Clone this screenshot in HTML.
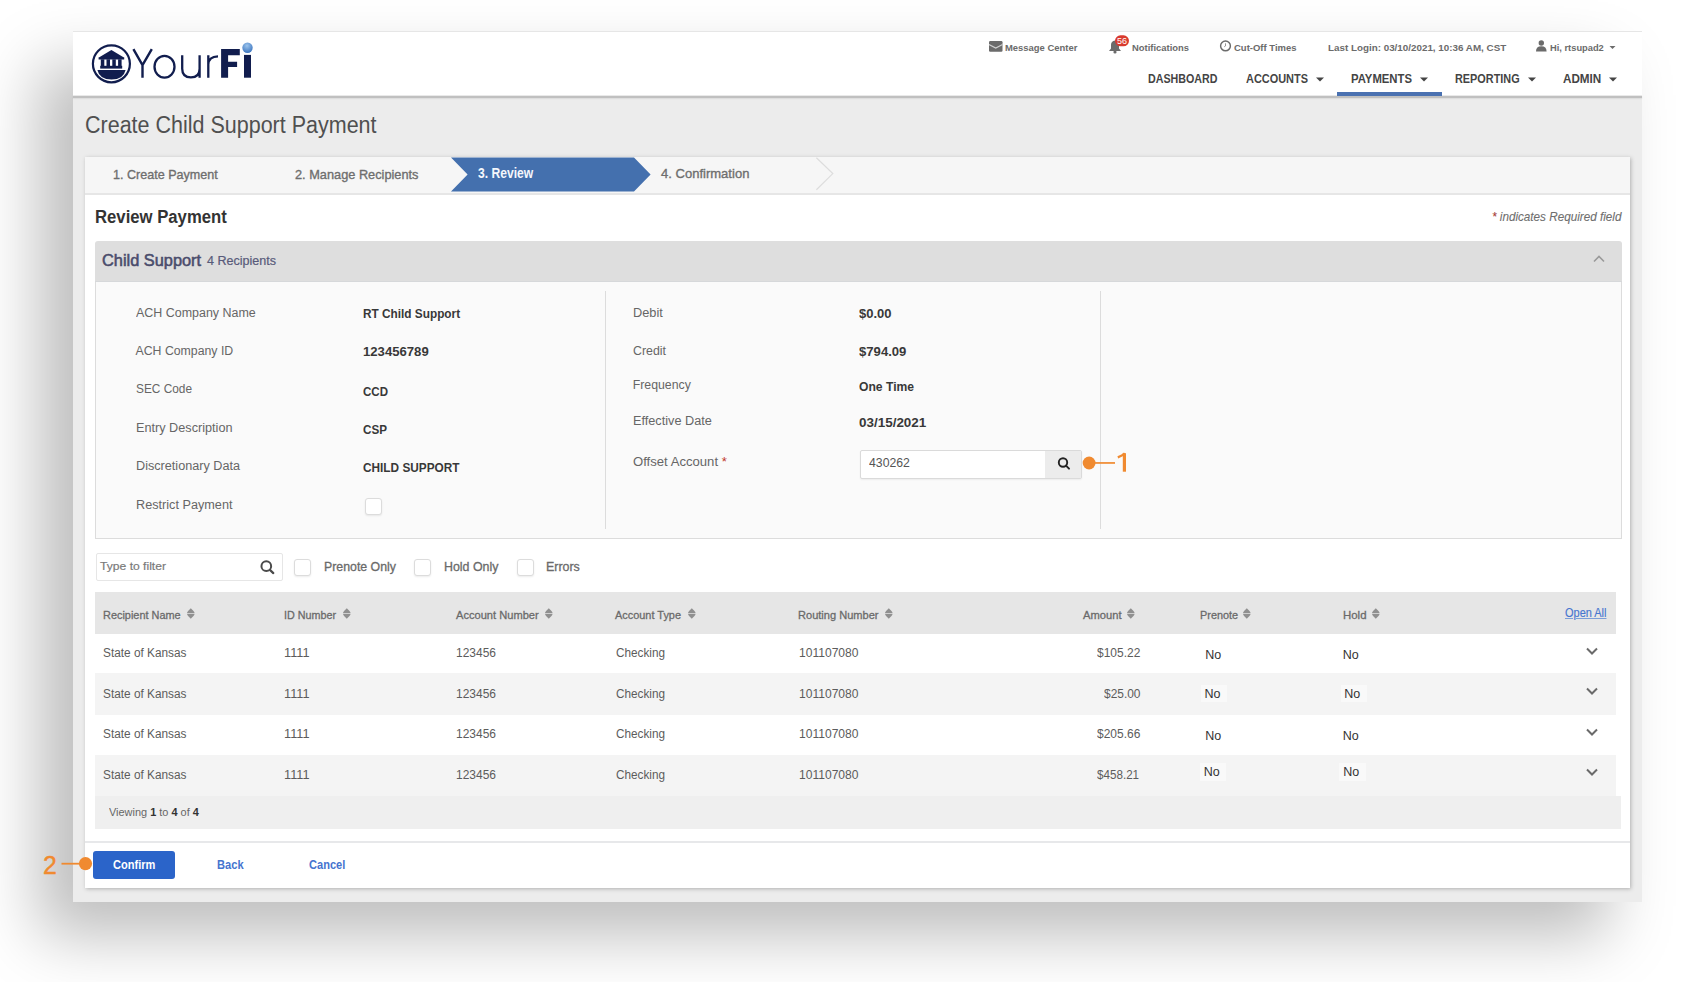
<!DOCTYPE html>
<html><head><meta charset="utf-8"><title>Create Child Support Payment</title>
<style>
html,body{margin:0;padding:0;}
body{width:1686px;height:982px;overflow:hidden;background:#fff;position:relative;font-family:"Liberation Sans",sans-serif;}
#root{position:absolute;left:0;top:0;width:1686px;height:982px;overflow:hidden;}
.t{position:absolute;white-space:nowrap;transform-origin:0 0;}
.a{position:absolute;box-sizing:border-box;}
#win{position:absolute;left:73px;top:31px;width:1569px;height:871px;background:#ececec;box-shadow:-34px 34px 60px rgba(0,0,0,0.26);}
#hdr{position:absolute;left:73px;top:31px;width:1569px;height:64px;background:#fff;border-top:1px solid #e6e6e6;box-sizing:border-box;}
#hdrline{position:absolute;left:73px;top:95.5px;width:1569px;height:2.5px;background:#c0c0c0;box-shadow:0 0.5px 1.5px rgba(0,0,0,0.12);}
#card{position:absolute;left:85.3px;top:157px;width:1545px;height:731px;background:#fff;box-shadow:1px 1px 4px rgba(0,0,0,0.25);}
#stepper{position:absolute;left:85.3px;top:157px;width:1545px;height:35.8px;background:#f6f6f6;border-bottom:2.2px solid #e6e6e6;}
#ph{position:absolute;left:95px;top:241.3px;width:1526.5px;height:40.5px;background:#dedede;border-radius:3px 3px 0 0;border-bottom:1.5px solid #d6d8da;box-sizing:border-box;}
#pb{position:absolute;left:95px;top:281.8px;width:1526.5px;height:257px;background:#fafafa;border:1px solid #dcdcdc;border-top:none;box-sizing:border-box;}
.vd{position:absolute;width:1px;background:#dcdcdc;top:291px;height:238px;}
.cb{position:absolute;width:17px;height:17px;border:1px solid #dcdcdc;border-radius:3px;background:#fff;box-sizing:border-box;box-shadow:0 1px 2px rgba(0,0,0,0.08);}
#filt{position:absolute;left:95.5px;top:553px;width:187.5px;height:28px;border:1px solid #e6e6e6;border-radius:2px;background:#fff;box-sizing:border-box;}
#th{position:absolute;left:95px;top:592.4px;width:1521px;height:41.6px;background:#e6e6e6;}
.row{position:absolute;left:95px;width:1521px;}
#foot{position:absolute;left:94.5px;top:795.8px;width:1526.8px;height:33.3px;background:#efefef;}
#div2{position:absolute;left:85.3px;top:840.9px;width:1545px;height:1.8px;background:#e7e8ea;}
#confirm{position:absolute;left:93px;top:851px;width:82px;height:28px;background:#2b64c9;border-radius:3px;}
#offin{position:absolute;left:859.5px;top:449.5px;width:222.5px;height:29px;border:1px solid #dadada;border-radius:2px;background:#fff;box-sizing:border-box;box-shadow:0 1px 2px rgba(0,0,0,0.06);}
#offbtn{position:absolute;left:1044.5px;top:450.5px;width:36.5px;height:27px;background:#ececec;}

</style></head><body><div id="root">
<div id="win"></div>
<div id="hdr"></div>
<div id="hdrline"></div>
<!-- blue underline -->
<div class="a" style="left:1337px;top:92.2px;width:105px;height:3.4px;background:#4a71b1"></div>
<!-- logo -->
<svg class="a" style="left:85px;top:35px" width="180" height="60" viewBox="85 35 180 60">
  <circle cx="111.4" cy="63.8" r="18.5" fill="none" stroke="#111d4e" stroke-width="2.2"/>
  <path d="M111.4 50 L123.5 57.2 L124.2 57.2 L124.2 59.4 L98.6 59.4 L98.6 57.2 L99.3 57.2 Z" fill="#111d4e"/>
  <rect x="100.8" y="59.3" width="3.5" height="6.8" fill="#111d4e"/>
  <rect x="106.5" y="59.3" width="3.5" height="6.8" fill="#111d4e"/>
  <rect x="112.3" y="59.3" width="3.5" height="6.8" fill="#111d4e"/>
  <rect x="118.1" y="59.3" width="3.5" height="6.8" fill="#111d4e"/>
  <rect x="100.2" y="65.8" width="22" height="2.8" fill="#111d4e"/>
  <path d="M97.4 70 L125.6 70 Q123.5 79.6 111.5 79.6 Q99.5 79.6 97.4 70 Z" fill="#111d4e"/>
  <path d="M133.4 49.2 L142.5 65 L151.8 49.2 M142.5 64.6 L142.5 77.7" fill="none" stroke="#111d4e" stroke-width="2.4"/>
  <ellipse cx="164.5" cy="66.7" rx="10" ry="10.9" fill="none" stroke="#111d4e" stroke-width="2.3"/>
  <path d="M182.2 55.3 L182.2 68.8 Q182.2 77.4 190.9 77.4 Q199.6 77.4 199.6 68.8 M199.6 55.3 L199.6 77.7" fill="none" stroke="#111d4e" stroke-width="2.3"/>
  <path d="M208.3 55.3 L208.3 77.7 M208.3 64.5 Q208.6 56.5 218 56.3" fill="none" stroke="#111d4e" stroke-width="2.3"/>
  <path d="M221.1 48.9 L239.8 48.9 L239.8 55.3 L228.1 55.3 L228.1 61.7 L237.1 61.7 L237.1 67 L228.1 67 L228.1 77.7 L221.1 77.7 Z" fill="#111d4e"/>
  <rect x="244" y="54.9" width="7" height="22.8" fill="#111d4e"/>
  <defs><radialGradient id="dg" cx="0.45" cy="0.3" r="0.75"><stop offset="0" stop-color="#9cc4ec"/><stop offset="1" stop-color="#3570bd"/></radialGradient></defs>
  <circle cx="247.5" cy="47.8" r="5.2" fill="url(#dg)"/>
</svg>
<!-- header icons -->
<svg class="a" style="left:988.5px;top:41px" width="14" height="11" viewBox="0 0 14 11">
  <rect x="0" y="0" width="13.5" height="10.7" rx="1.2" fill="#6b6b6b"/>
  <path d="M0 3.6 L6.75 7.1 L13.5 3.6" fill="none" stroke="#d0d0d0" stroke-width="1.1"/>
</svg>
<svg class="a" style="left:1108px;top:34px" width="24" height="20" viewBox="0 0 24 20">
  <path d="M1 17 L3 14.5 L3 11 Q3 7 7 6.5 Q11 7 11 11 L11 14.5 L13 17 Z" fill="#6b6b6b"/>
  <circle cx="7" cy="18" r="1.6" fill="#6b6b6b"/>
  <rect x="7" y="1.3" width="14" height="11" rx="5.5" fill="#d93a2e"/>
  <text x="14" y="10.2" font-family="Liberation Sans" font-size="9" fill="#fff" text-anchor="middle" style="font-family:'Liberation Sans'">56</text>
</svg>
<svg class="a" style="left:1219px;top:40px" width="13" height="13" viewBox="0 0 13 13">
  <circle cx="6.5" cy="5.9" r="4.9" fill="none" stroke="#6b6b6b" stroke-width="1.45"/>
  <path d="M6.5 3.3 L6.5 6 L5.2 6.8" fill="none" stroke="#8a8a8a" stroke-width="0.9"/>
</svg>
<svg class="a" style="left:1535px;top:40px" width="13" height="12" viewBox="0 0 13 12">
  <circle cx="6.3" cy="3" r="2.7" fill="#6b6b6b"/>
  <path d="M1 11.5 Q1 6.2 6.3 6.2 Q11.6 6.2 11.6 11.5 Z" fill="#6b6b6b"/>
</svg>
<svg class="a" style="left:1605px;top:44px" width="14" height="6" viewBox="0 0 14 6"><path d="M4.5 2 L10.5 2 L7.5 5 Z" fill="#6b6b6b"/></svg>
<!-- nav carets -->
<svg class="a" style="left:1314px;top:75px" width="12" height="8" viewBox="0 0 12 8"><path d="M2 2.5 L10 2.5 L6 6.5 Z" fill="#444"/></svg>
<svg class="a" style="left:1418px;top:75px" width="12" height="8" viewBox="0 0 12 8"><path d="M2 2.5 L10 2.5 L6 6.5 Z" fill="#444"/></svg>
<svg class="a" style="left:1525.5px;top:75px" width="12" height="8" viewBox="0 0 12 8"><path d="M2 2.5 L10 2.5 L6 6.5 Z" fill="#444"/></svg>
<svg class="a" style="left:1607px;top:75px" width="12" height="8" viewBox="0 0 12 8"><path d="M2 2.5 L10 2.5 L6 6.5 Z" fill="#444"/></svg>

<div id="card"></div>
<div id="stepper"></div>
<svg class="a" style="left:440px;top:157px" width="410" height="36" viewBox="440 157 410 36">
  <path d="M451 157.4 L634 157.4 L650.6 174.4 L634 191.5 L451 191.5 L467.6 174.4 Z" fill="#4470ae"/>
  <path d="M816.4 157.8 L832.8 173.6 L816.4 189.8" fill="none" stroke="#dddddd" stroke-width="1.2"/>
</svg>

<div id="ph"></div>
<svg class="a" style="left:1590px;top:250px" width="18" height="16" viewBox="0 0 18 16"><path d="M4 11.5 L9 6.5 L14 11.5" fill="none" stroke="#9a9a9a" stroke-width="1.6"/></svg>
<div id="pb"></div>
<div class="vd" style="left:605px"></div>
<div class="vd" style="left:1100.3px"></div>
<div class="cb" style="left:364.5px;top:497.5px;"></div>
<div id="offin"></div>
<div id="offbtn"></div>
<svg class="a" style="left:1056px;top:456px" width="16" height="16" viewBox="0 0 16 16">
  <circle cx="7" cy="6.5" r="4.2" fill="none" stroke="#222" stroke-width="1.9"/>
  <path d="M10 9.6 L13 12.6" stroke="#222" stroke-width="2" stroke-linecap="round"/>
</svg>

<div id="filt"></div>
<svg class="a" style="left:258px;top:558px" width="18" height="18" viewBox="0 0 18 18">
  <circle cx="8.3" cy="8.2" r="4.85" fill="none" stroke="#4a4a4a" stroke-width="2"/>
  <path d="M11.9 11.9 L15.3 15.1" stroke="#4a4a4a" stroke-width="2.2" stroke-linecap="round"/>
</svg>
<div class="cb" style="left:294px;top:558.5px;"></div>
<div class="cb" style="left:414px;top:558.5px;"></div>
<div class="cb" style="left:516.5px;top:558.5px;"></div>

<div id="th"></div>
<div class="row" style="top:634px;height:39px;background:#fff"></div>
<div class="row" style="top:673px;height:41.5px;background:#f4f4f4"></div>
<div class="row" style="top:714.5px;height:40px;background:#fff"></div>
<div class="row" style="top:754.5px;height:41px;background:#f4f4f4"></div>
<div id="foot"></div>
<div id="div2"></div>
<div id="confirm"></div>

<!-- sort icons -->
<svg width="0" height="0" style="position:absolute"><defs><g id="sort"><path d="M3.8 0.2 C5.3 1.6 7.6 3.6 7.6 5.1 L0 5.1 C0 3.6 2.3 1.6 3.8 0.2 Z M0 5.8 L7.6 5.8 C7.6 7.3 5.3 9.3 3.8 10.7 C2.3 9.3 0 7.3 0 5.8 Z" fill="#909090"/></g></defs></svg>
<svg class="a" style="left:186.5px;top:607.5px" width="8" height="11"><use href="#sort"/></svg>
<svg class="a" style="left:342.5px;top:607.5px" width="8" height="11"><use href="#sort"/></svg>
<svg class="a" style="left:545px;top:607.5px" width="8" height="11"><use href="#sort"/></svg>
<svg class="a" style="left:688px;top:607.5px" width="8" height="11"><use href="#sort"/></svg>
<svg class="a" style="left:884.5px;top:607.5px" width="8" height="11"><use href="#sort"/></svg>
<svg class="a" style="left:1127px;top:607.5px" width="8" height="11"><use href="#sort"/></svg>
<svg class="a" style="left:1243px;top:607.5px" width="8" height="11"><use href="#sort"/></svg>
<svg class="a" style="left:1371.5px;top:607.5px" width="8" height="11"><use href="#sort"/></svg>

<!-- row chevrons -->
<svg width="0" height="0" style="position:absolute"><defs><g id="chev"><path d="M1 1.5 L6 6.5 L11 1.5" fill="none" stroke="#6a6a6a" stroke-width="2"/></g></defs></svg>
<svg class="a" style="left:1586px;top:646.5px" width="12" height="9"><use href="#chev"/></svg>
<svg class="a" style="left:1586px;top:687.2px" width="12" height="9"><use href="#chev"/></svg>
<svg class="a" style="left:1586px;top:727.7px" width="12" height="9"><use href="#chev"/></svg>
<svg class="a" style="left:1586px;top:768.3px" width="12" height="9"><use href="#chev"/></svg>

<!-- annotations -->
<svg class="a" style="left:0;top:0" width="1686" height="982">
  <circle cx="1089.1" cy="463" r="6.4" fill="#f08a30"/>
  <rect x="1089" y="462.1" width="26" height="1.7" fill="#f08a30"/>
  <rect x="1122.8" y="453.2" width="3.2" height="18.5" fill="#f08a30"/>
  <path d="M1117.8 457.3 Q1122.6 455.6 1124.8 453.4" fill="none" stroke="#f08a30" stroke-width="2.3"/>
  <circle cx="85.5" cy="863.6" r="6.6" fill="#f08a30"/>
  <rect x="61.5" y="862.8" width="24" height="1.8" fill="#f08a30"/>
</svg>
<div class="a" style="left:1200.5px;top:685px;width:26.2px;height:17px;background:#f9f9f9"></div>
<div class="a" style="left:1340.5px;top:685px;width:26px;height:17px;background:#f9f9f9"></div>
<div class="a" style="left:1199.5px;top:763px;width:26px;height:17.5px;background:#f9f9f9"></div>
<div class="a" style="left:1339px;top:763px;width:26.7px;height:17.5px;background:#f9f9f9"></div>

<div class='t' style="left:1005.0px;top:42.77px;font-size:9.6px;line-height:9.6px;font-weight:700;color:#6b6b6b;transform:scaleX(0.9838);">Message Center</div><div class='t' style="left:1132.3px;top:42.77px;font-size:9.6px;line-height:9.6px;font-weight:700;color:#6b6b6b;transform:scaleX(0.9809);">Notifications</div><div class='t' style="left:1234.3px;top:42.77px;font-size:9.6px;line-height:9.6px;font-weight:700;color:#6b6b6b;transform:scaleX(0.9881);">Cut-Off Times</div><div class='t' style="left:1327.8px;top:42.77px;font-size:9.6px;line-height:9.6px;font-weight:700;color:#6b6b6b;transform:scaleX(1.0241);">Last Login: 03/10/2021, 10:36 AM, CST</div><div class='t' style="left:1550.0px;top:42.77px;font-size:9.6px;line-height:9.6px;font-weight:700;color:#6b6b6b;transform:scaleX(0.9702);">Hi, rtsupad2</div><div class='t' style="left:1148.3px;top:72.56px;font-size:12.8px;line-height:12.8px;font-weight:700;color:#444;transform:scaleX(0.8355);">DASHBOARD</div><div class='t' style="left:1246.0px;top:72.56px;font-size:12.8px;line-height:12.8px;font-weight:700;color:#444;transform:scaleX(0.8550);">ACCOUNTS</div><div class='t' style="left:1351.0px;top:72.56px;font-size:12.8px;line-height:12.8px;font-weight:700;color:#444;transform:scaleX(0.8843);">PAYMENTS</div><div class='t' style="left:1455.0px;top:72.56px;font-size:12.8px;line-height:12.8px;font-weight:700;color:#444;transform:scaleX(0.8491);">REPORTING</div><div class='t' style="left:1562.7px;top:72.56px;font-size:12.8px;line-height:12.8px;font-weight:700;color:#444;transform:scaleX(0.9129);">ADMIN</div><div class='t' style="left:85.3px;top:114.13px;font-size:23px;line-height:23px;font-weight:400;color:#505050;transform:scaleX(0.9345);">Create Child Support Payment</div><div class='t' style="left:113.2px;top:167.96px;font-size:13.4px;line-height:13.4px;font-weight:400;color:#6e6e6e;transform:scaleX(0.9386);;-webkit-text-stroke:0.35px #6e6e6e">1. Create Payment</div><div class='t' style="left:295.0px;top:167.96px;font-size:13.4px;line-height:13.4px;font-weight:400;color:#6e6e6e;transform:scaleX(0.9534);;-webkit-text-stroke:0.35px #6e6e6e">2. Manage Recipients</div><div class='t' style="left:477.7px;top:167.12px;font-size:13.8px;line-height:13.8px;font-weight:700;color:#f4f7fc;transform:scaleX(0.8777);">3. Review</div><div class='t' style="left:661.0px;top:166.96px;font-size:13.4px;line-height:13.4px;font-weight:400;color:#6e6e6e;transform:scaleX(0.9734);;-webkit-text-stroke:0.35px #6e6e6e">4. Confirmation</div><div class='t' style="left:95.0px;top:209.19px;font-size:17.5px;line-height:17.5px;font-weight:700;color:#333;transform:scaleX(0.9542);">Review Payment</div><div class='t' style="left:1492.3px;top:210.53px;font-size:12.6px;line-height:12.6px;font-weight:400;color:#6e6e6e;font-style:italic;transform:scaleX(0.9287);;-webkit-text-stroke:0.1px #6e6e6e"><span style="color:#b5332b">*</span> indicates Required field</div><div class='t' style="left:102.2px;top:251.53px;font-size:16.5px;line-height:16.5px;font-weight:400;color:#4a4c6c;transform:scaleX(0.9912);;-webkit-text-stroke:0.55px #4a4c6c">Child Support</div><div class='t' style="left:206.6px;top:255.34px;font-size:12px;line-height:12px;font-weight:400;color:#585a7a;transform:scaleX(1.0462);;-webkit-text-stroke:0.2px #585a7a">4 Recipients</div><div class='t' style="left:135.5px;top:307.39px;font-size:12.3px;line-height:12.3px;font-weight:400;color:#666;transform:scaleX(1.0132);">ACH Company Name</div><div class='t' style="left:362.5px;top:307.99px;font-size:12.3px;line-height:12.3px;font-weight:700;color:#383838;transform:scaleX(0.9605);">RT Child Support</div><div class='t' style="left:135.5px;top:344.89px;font-size:12.3px;line-height:12.3px;font-weight:400;color:#666;">ACH Company ID</div><div class='t' style="left:362.5px;top:346.49px;font-size:12.3px;line-height:12.3px;font-weight:700;color:#383838;transform:scaleX(1.0672);">123456789</div><div class='t' style="left:135.5px;top:383.29px;font-size:12.3px;line-height:12.3px;font-weight:400;color:#666;transform:scaleX(0.9637);">SEC Code</div><div class='t' style="left:362.5px;top:385.59px;font-size:12.3px;line-height:12.3px;font-weight:700;color:#383838;transform:scaleX(0.9379);">CCD</div><div class='t' style="left:135.5px;top:421.59px;font-size:12.3px;line-height:12.3px;font-weight:400;color:#666;transform:scaleX(1.0305);">Entry Description</div><div class='t' style="left:362.5px;top:423.99px;font-size:12.3px;line-height:12.3px;font-weight:700;color:#383838;transform:scaleX(0.9487);">CSP</div><div class='t' style="left:135.5px;top:460.49px;font-size:12.3px;line-height:12.3px;font-weight:400;color:#666;transform:scaleX(1.0281);">Discretionary Data</div><div class='t' style="left:362.5px;top:462.39px;font-size:12.3px;line-height:12.3px;font-weight:700;color:#383838;transform:scaleX(0.9608);">CHILD SUPPORT</div><div class='t' style="left:135.5px;top:498.89px;font-size:12.3px;line-height:12.3px;font-weight:400;color:#666;transform:scaleX(1.0307);">Restrict Payment</div><div class='t' style="left:632.7px;top:307.39px;font-size:12.3px;line-height:12.3px;font-weight:400;color:#666;transform:scaleX(1.0376);">Debit</div><div class='t' style="left:859.4px;top:307.99px;font-size:12.3px;line-height:12.3px;font-weight:700;color:#383838;transform:scaleX(1.0591);">$0.00</div><div class='t' style="left:632.7px;top:344.89px;font-size:12.3px;line-height:12.3px;font-weight:400;color:#666;transform:scaleX(1.0057);">Credit</div><div class='t' style="left:859.4px;top:346.49px;font-size:12.3px;line-height:12.3px;font-weight:700;color:#383838;transform:scaleX(1.0663);">$794.09</div><div class='t' style="left:632.7px;top:379.49px;font-size:12.3px;line-height:12.3px;font-weight:400;color:#666;">Frequency</div><div class='t' style="left:859.4px;top:381.09px;font-size:12.3px;line-height:12.3px;font-weight:700;color:#383838;transform:scaleX(0.9872);">One Time</div><div class='t' style="left:632.7px;top:414.59px;font-size:12.3px;line-height:12.3px;font-weight:400;color:#666;transform:scaleX(1.0324);">Effective Date</div><div class='t' style="left:859.4px;top:416.89px;font-size:12.3px;line-height:12.3px;font-weight:700;color:#383838;transform:scaleX(1.0935);">03/15/2021</div><div class='t' style="left:632.7px;top:456.29px;font-size:12.3px;line-height:12.3px;font-weight:400;color:#666;transform:scaleX(1.0663);">Offset Account <span style="color:#c0392b">*</span></div><div class='t' style="left:869.4px;top:457.02px;font-size:12.5px;line-height:12.5px;font-weight:400;color:#555;transform:scaleX(0.9804);">430262</div><div class='t' style="left:100.2px;top:561.31px;font-size:11.8px;line-height:11.8px;font-weight:400;color:#7a7a7a;transform:scaleX(1.0270);;-webkit-text-stroke:0.2px #7a7a7a">Type to filter</div><div class='t' style="left:324.0px;top:560.72px;font-size:12.5px;line-height:12.5px;font-weight:400;color:#6a6a6a;transform:scaleX(0.9867);;-webkit-text-stroke:0.3px #6a6a6a">Prenote Only</div><div class='t' style="left:444.0px;top:560.72px;font-size:12.5px;line-height:12.5px;font-weight:400;color:#6a6a6a;transform:scaleX(0.9911);;-webkit-text-stroke:0.3px #6a6a6a">Hold Only</div><div class='t' style="left:546.4px;top:560.72px;font-size:12.5px;line-height:12.5px;font-weight:400;color:#6a6a6a;transform:scaleX(0.9932);;-webkit-text-stroke:0.3px #6a6a6a">Errors</div><div class='t' style="left:102.9px;top:608.98px;font-size:11.6px;line-height:11.6px;font-weight:400;color:#6a6a6a;transform:scaleX(0.9408);;-webkit-text-stroke:0.3px #6a6a6a">Recipient Name</div><div class='t' style="left:283.8px;top:608.98px;font-size:11.6px;line-height:11.6px;font-weight:400;color:#6a6a6a;transform:scaleX(0.9275);;-webkit-text-stroke:0.3px #6a6a6a">ID Number</div><div class='t' style="left:456.2px;top:608.98px;font-size:11.6px;line-height:11.6px;font-weight:400;color:#6a6a6a;transform:scaleX(0.9576);;-webkit-text-stroke:0.3px #6a6a6a">Account Number</div><div class='t' style="left:615.4px;top:608.98px;font-size:11.6px;line-height:11.6px;font-weight:400;color:#6a6a6a;transform:scaleX(0.9422);;-webkit-text-stroke:0.3px #6a6a6a">Account Type</div><div class='t' style="left:798.2px;top:608.98px;font-size:11.6px;line-height:11.6px;font-weight:400;color:#6a6a6a;transform:scaleX(0.9535);;-webkit-text-stroke:0.3px #6a6a6a">Routing Number</div><div class='t' style="left:1082.6px;top:608.98px;font-size:11.6px;line-height:11.6px;font-weight:400;color:#6a6a6a;transform:scaleX(0.9633);;-webkit-text-stroke:0.3px #6a6a6a">Amount</div><div class='t' style="left:1200.0px;top:608.98px;font-size:11.6px;line-height:11.6px;font-weight:400;color:#6a6a6a;transform:scaleX(0.9382);;-webkit-text-stroke:0.3px #6a6a6a">Prenote</div><div class='t' style="left:1342.6px;top:608.98px;font-size:11.6px;line-height:11.6px;font-weight:400;color:#6a6a6a;transform:scaleX(0.9849);;-webkit-text-stroke:0.3px #6a6a6a">Hold</div><div class='t' style="left:1565.4px;top:607.17px;font-size:12.2px;line-height:12.2px;font-weight:400;color:#4676d0;transform:scaleX(0.9006);text-decoration:underline;text-decoration-thickness:1.3px;text-decoration-color:#7c9ed8;text-underline-offset:1px;-webkit-text-stroke:0.15px #4676d0">Open All</div><div class='t' style="left:102.9px;top:646.92px;font-size:12.5px;line-height:12.5px;font-weight:400;color:#5c5c5c;transform:scaleX(0.9460);">State of Kansas</div><div class='t' style="left:284.0px;top:646.92px;font-size:12.5px;line-height:12.5px;font-weight:400;color:#5c5c5c;transform:scaleX(1.0187);">1111</div><div class='t' style="left:456.4px;top:646.92px;font-size:12.5px;line-height:12.5px;font-weight:400;color:#5c5c5c;transform:scaleX(0.9588);">123456</div><div class='t' style="left:615.6px;top:646.92px;font-size:12.5px;line-height:12.5px;font-weight:400;color:#5c5c5c;transform:scaleX(0.9400);">Checking</div><div class='t' style="left:799.0px;top:646.92px;font-size:12.5px;line-height:12.5px;font-weight:400;color:#5c5c5c;transform:scaleX(0.9653);">101107080</div><div class='t' style="left:1096.7px;top:646.92px;font-size:12.5px;line-height:12.5px;font-weight:400;color:#5c5c5c;transform:scaleX(0.9582);">$105.22</div><div class='t' style="left:1205.3px;top:648.52px;font-size:12.5px;line-height:12.5px;font-weight:400;color:#333;">No</div><div class='t' style="left:1342.8px;top:648.52px;font-size:12.5px;line-height:12.5px;font-weight:400;color:#333;">No</div><div class='t' style="left:102.9px;top:687.82px;font-size:12.5px;line-height:12.5px;font-weight:400;color:#5c5c5c;transform:scaleX(0.9460);">State of Kansas</div><div class='t' style="left:284.0px;top:687.82px;font-size:12.5px;line-height:12.5px;font-weight:400;color:#5c5c5c;transform:scaleX(1.0187);">1111</div><div class='t' style="left:456.4px;top:687.82px;font-size:12.5px;line-height:12.5px;font-weight:400;color:#5c5c5c;transform:scaleX(0.9588);">123456</div><div class='t' style="left:615.6px;top:687.82px;font-size:12.5px;line-height:12.5px;font-weight:400;color:#5c5c5c;transform:scaleX(0.9400);">Checking</div><div class='t' style="left:799.0px;top:687.82px;font-size:12.5px;line-height:12.5px;font-weight:400;color:#5c5c5c;transform:scaleX(0.9653);">101107080</div><div class='t' style="left:1103.5px;top:687.82px;font-size:12.5px;line-height:12.5px;font-weight:400;color:#5c5c5c;transform:scaleX(0.9546);">$25.00</div><div class='t' style="left:1204.5px;top:688.12px;font-size:12.5px;line-height:12.5px;font-weight:400;color:#333;">No</div><div class='t' style="left:1344.3px;top:688.12px;font-size:12.5px;line-height:12.5px;font-weight:400;color:#333;">No</div><div class='t' style="left:102.9px;top:728.02px;font-size:12.5px;line-height:12.5px;font-weight:400;color:#5c5c5c;transform:scaleX(0.9460);">State of Kansas</div><div class='t' style="left:284.0px;top:728.02px;font-size:12.5px;line-height:12.5px;font-weight:400;color:#5c5c5c;transform:scaleX(1.0187);">1111</div><div class='t' style="left:456.4px;top:728.02px;font-size:12.5px;line-height:12.5px;font-weight:400;color:#5c5c5c;transform:scaleX(0.9588);">123456</div><div class='t' style="left:615.6px;top:728.02px;font-size:12.5px;line-height:12.5px;font-weight:400;color:#5c5c5c;transform:scaleX(0.9400);">Checking</div><div class='t' style="left:799.0px;top:728.02px;font-size:12.5px;line-height:12.5px;font-weight:400;color:#5c5c5c;transform:scaleX(0.9653);">101107080</div><div class='t' style="left:1096.7px;top:728.02px;font-size:12.5px;line-height:12.5px;font-weight:400;color:#5c5c5c;transform:scaleX(0.9582);">$205.66</div><div class='t' style="left:1205.3px;top:730.02px;font-size:12.5px;line-height:12.5px;font-weight:400;color:#333;">No</div><div class='t' style="left:1342.8px;top:730.02px;font-size:12.5px;line-height:12.5px;font-weight:400;color:#333;">No</div><div class='t' style="left:102.9px;top:768.82px;font-size:12.5px;line-height:12.5px;font-weight:400;color:#5c5c5c;transform:scaleX(0.9460);">State of Kansas</div><div class='t' style="left:284.0px;top:768.82px;font-size:12.5px;line-height:12.5px;font-weight:400;color:#5c5c5c;transform:scaleX(1.0187);">1111</div><div class='t' style="left:456.4px;top:768.82px;font-size:12.5px;line-height:12.5px;font-weight:400;color:#5c5c5c;transform:scaleX(0.9588);">123456</div><div class='t' style="left:615.6px;top:768.82px;font-size:12.5px;line-height:12.5px;font-weight:400;color:#5c5c5c;transform:scaleX(0.9400);">Checking</div><div class='t' style="left:799.0px;top:768.82px;font-size:12.5px;line-height:12.5px;font-weight:400;color:#5c5c5c;transform:scaleX(0.9653);">101107080</div><div class='t' style="left:1096.9px;top:768.82px;font-size:12.5px;line-height:12.5px;font-weight:400;color:#5c5c5c;transform:scaleX(0.9317);">$458.21</div><div class='t' style="left:1203.8px;top:766.32px;font-size:12.5px;line-height:12.5px;font-weight:400;color:#333;">No</div><div class='t' style="left:1343.2px;top:766.32px;font-size:12.5px;line-height:12.5px;font-weight:400;color:#333;">No</div><div class='t' style="left:108.6px;top:807.31px;font-size:10.5px;line-height:10.5px;font-weight:400;color:#666;transform:scaleX(1.0415);">Viewing <b style="color:#333">1</b> to <b style="color:#333">4</b> of <b style="color:#333">4</b></div><div class='t' style="left:112.7px;top:858.84px;font-size:12px;line-height:12px;font-weight:700;color:#fff;transform:scaleX(0.9196);">Confirm</div><div class='t' style="left:216.8px;top:858.84px;font-size:12px;line-height:12px;font-weight:700;color:#4574cf;transform:scaleX(0.9272);">Back</div><div class='t' style="left:309.3px;top:858.84px;font-size:12px;line-height:12px;font-weight:700;color:#4574cf;transform:scaleX(0.9223);">Cancel</div><div class='t' style="left:43.0px;top:851.57px;font-size:26.5px;line-height:26.5px;font-weight:400;color:#f08a30;transform:scaleX(0.9356);;-webkit-text-stroke:0.45px #f08a30">2</div>
</div></body></html>
